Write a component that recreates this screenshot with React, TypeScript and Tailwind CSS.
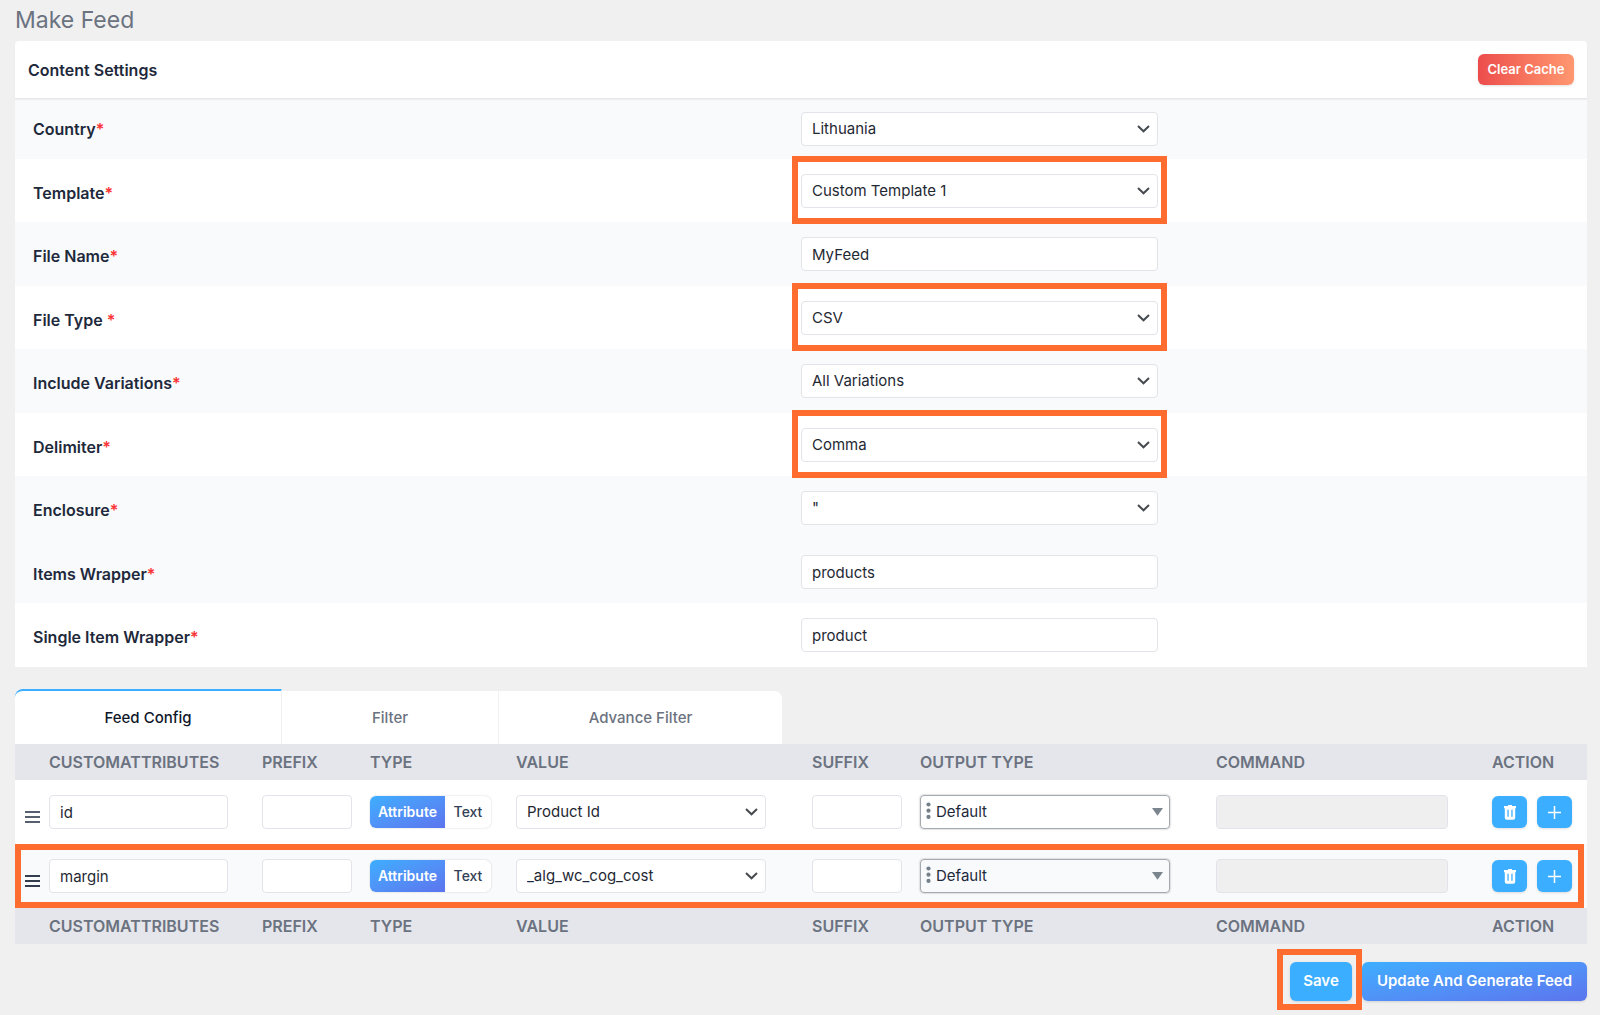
import type { ReactNode } from 'react';

type Field = {
  id: string;
  label: string;
  value: string;
  select?: boolean;
  marked?: boolean;
  className: string;
};

const fields: Field[] = [
  { id: 'country', label: 'Country', value: 'Lithuania', select: true, className: 'bg-[#f9fafc] pt-[13px] pb-[13px]' },
  { id: 'template', label: 'Template', value: 'Custom Template 1', select: true, marked: true, className: 'bg-white pt-[15px] pb-[14px]' },
  { id: 'filename', label: 'File Name', value: 'MyFeed', className: 'bg-[#f9fafc] pt-[15px] pb-[15px]' },
  { id: 'filetype', label: 'File Type ', value: 'CSV', select: true, marked: true, className: 'bg-white pt-[15px] pb-[14px]' },
  { id: 'variations', label: 'Include Variations', value: 'All Variations', select: true, className: 'bg-[#f9fafc] pt-[15px] pb-[15px]' },
  { id: 'delimiter', label: 'Delimiter', value: 'Comma', select: true, marked: true, className: 'bg-white pt-[15px] pb-[14px]' },
  { id: 'enclosure', label: 'Enclosure', value: '"', select: true, className: 'bg-[#f9fafc] pt-[15px] pb-[15px]' },
  { id: 'items', label: 'Items Wrapper', value: 'products', className: 'bg-[#f9fafc] pt-[15px] pb-[14px]' },
  { id: 'item', label: 'Single Item Wrapper', value: 'product', className: 'bg-white pt-[15px] pb-[15px]' },
];

const rows = [
  { attribute: 'id', value: 'Product Id' },
  { attribute: 'margin', value: '_alg_wc_cog_cost', marked: true },
];

const headings = ['CustomAttributes', 'Prefix', 'Type', 'Value', 'Suffix', 'Output Type', 'Command', 'Action'];

const control = 'block h-[34px] w-full rounded border border-[#e2e4e9] bg-white px-[10px] text-[15px] text-[#1f2933] outline-none';

function TextInput({ id, label, value = '', disabled }: { id?: string; label?: string; value?: string; disabled?: boolean }) {
  return (
    <input
      id={id}
      type="text"
      aria-label={label}
      defaultValue={value}
      disabled={disabled}
      className={disabled ? 'block h-[34px] w-full rounded border border-[#e2e4e9] bg-[#efefef]' : control}
    />
  );
}

function Select({ id, label, value }: { id?: string; label?: string; value: string }) {
  return (
    <div className="relative">
      <select id={id} aria-label={label} defaultValue={value} className={`${control} appearance-none`}>
        <option>{value}</option>
      </select>
      <svg
        className="pointer-events-none absolute top-[13px] right-[8px]"
        width="13"
        height="8"
        viewBox="0 0 13 8"
        fill="none"
        stroke="#464b50"
        strokeWidth="2"
      >
        <path d="M1 1l5.5 5.3L12 1" />
      </svg>
    </div>
  );
}

function OutputSelect() {
  return (
    <div className="relative">
      <select
        aria-label="Output type"
        className="block h-[34px] w-full appearance-none rounded border border-[#a3a9ae] bg-transparent pl-[15px] text-[15px] text-[#1e293b] shadow-[0_0_2px_rgba(0,0,0,0.35)] outline-none"
      >
        <option>Default</option>
      </select>
      <svg className="pointer-events-none absolute top-[7px] left-[6px]" width="5" height="18" viewBox="0 0 5 18" fill="#74808a">
        <circle cx="2.5" cy="2.5" r="2.1" />
        <circle cx="2.5" cy="8.7" r="2.1" />
        <circle cx="2.5" cy="14.9" r="2.1" />
      </svg>
      <svg className="pointer-events-none absolute top-[13px] right-[7px]" width="11" height="8" viewBox="0 0 11 8" fill="#7b858e">
        <path d="M0 0h11L5.5 7.8z" />
      </svg>
    </div>
  );
}

function IconButton({ label, children }: { label: string; children: ReactNode }) {
  return (
    <button
      type="button"
      aria-label={label}
      className="flex h-8 w-[35px] items-center justify-center rounded-md bg-[#3caeff] text-white shadow-sm"
    >
      {children}
    </button>
  );
}

function HeadRow() {
  return (
    <tr className="h-9 bg-[#e5e6eb] text-left text-[#6b7280]">
      <td />
      {headings.map((heading) => (
        <th key={heading} className="text-base leading-6 font-semibold uppercase">
          {heading}
        </th>
      ))}
    </tr>
  );
}

export default function App() {
  return (
    <main className="min-h-screen bg-[#f0f0f0] pr-[13px] pb-3 pl-[15px] font-['Inter',sans-serif] text-[#1e293b]">
      <h1 className="h-[41px] pt-1 text-[23px] leading-8 text-[#6b7280]">Make Feed</h1>

      <section>
        <header className="relative flex h-[58px] items-center justify-between rounded-t border-b border-[#e5e7eb] bg-white px-[13px] shadow-[0_1px_2px_rgba(0,0,0,0.06)]">
          <h2 className="text-base font-semibold">Content Settings</h2>
          <button
            type="button"
            className="h-[31px] w-24 rounded-md bg-linear-to-r from-[#ec4c4c] to-[#ff9770] text-[13px] font-semibold text-white shadow-sm"
          >
            Clear Cache
          </button>
        </header>
        {fields.map((field, index) => (
          <div key={field.id} className={`grid grid-cols-2 ${field.className}`}>
            <label
              htmlFor={field.id}
              className={`pl-[18px] text-base leading-6 font-semibold whitespace-pre ${index === 0 ? 'pt-[5px]' : 'pt-[7px]'}`}
            >
              {field.label}
              <span className="text-[#f93434]">*</span>
            </label>
            <div className="relative w-[357px]">
              {field.select ? (
                <Select id={field.id} value={field.value} />
              ) : (
                <TextInput id={field.id} value={field.value} />
              )}
              {field.marked && (
                <div className="pointer-events-none absolute -inset-x-[9px] -top-[18px] z-10 h-[68px] border-6 border-[#ff6c2f]" />
              )}
            </div>
          </div>
        ))}
      </section>

      <nav className="mt-[22px] flex items-end text-[15px] font-medium text-[#6b7280]">
        <button type="button" className="h-[55px] w-[267px] rounded-tl-lg border-t-2 border-r border-t-[#3caeff] border-r-[#f0f1f3] bg-white pt-0.5 text-[#0f172a]">
          Feed Config
        </button>
        <button type="button" className="h-[53px] w-[217px] border-r border-[#f0f1f3] bg-white pt-0.5">
          Filter
        </button>
        <button type="button" className="h-[53px] w-[283px] rounded-tr-lg bg-white pt-0.5">
          Advance Filter
        </button>
      </nav>

      <table className="w-full table-fixed border-collapse">
        <colgroup>
          <col className="w-[34px]" />
          <col className="w-[213px]" />
          <col className="w-[108px]" />
          <col className="w-[146px]" />
          <col className="w-[296px]" />
          <col className="w-[108px]" />
          <col className="w-[296px]" />
          <col className="w-[276px]" />
          <col className="w-[95px]" />
        </colgroup>
        <thead>
          <HeadRow />
        </thead>
        <tbody>
          {rows.map((row) => (
            <tr key={row.attribute} className="relative h-16 bg-white even:bg-[#f9fafc]">
              <td className="pt-[9px] pl-[10px]">
                <svg width="15" height="12" viewBox="0 0 15 12" stroke={row.marked ? '#333d4d' : '#56606e'} strokeWidth="1.8">
                  <path d="M0 1h15M0 6h15M0 11h15" />
                </svg>
                {row.marked && (
                  <div className="pointer-events-none absolute inset-y-0 right-[3px] left-0 border-6 border-[#ff6c2f]" />
                )}
              </td>
              <td className="pr-[34px]">
                <TextInput label="Custom attribute" value={row.attribute} />
              </td>
              <td className="pr-[18px]">
                <TextInput label="Prefix" />
              </td>
              <td>
                <div className="flex h-8 w-[121px] overflow-hidden rounded-md bg-white text-sm shadow-[0_0_2px_rgba(0,0,0,0.2)]">
                  <button type="button" className="w-[75px] bg-linear-to-br from-[#3caeff] to-[#5b74ee] font-semibold text-white">
                    Attribute
                  </button>
                  <button type="button" className="flex-1 font-medium text-[#334155]">
                    Text
                  </button>
                </div>
              </td>
              <td className="pr-[46px]">
                <Select label="Value" value={row.value} />
              </td>
              <td className="pr-[18px]">
                <TextInput label="Suffix" />
              </td>
              <td className="pr-[46px]">
                <OutputSelect />
              </td>
              <td className="pr-[44px]">
                <TextInput label="Command" disabled />
              </td>
              <td>
                <div className="flex gap-[10px]">
                  <IconButton label="Delete">
                    <svg width="12" height="15" viewBox="0 0 12 15" fill="currentColor" fillRule="evenodd">
                      <path d="M4 0h4v1h4v2.2H0V1h4zM.8 3.2h10.4V13a1.8 1.8 0 0 1-1.8 1.8H2.6A1.8 1.8 0 0 1 .8 13zM3.4 4.8v7h1.3v-7zm3.9 0v7h1.3v-7z" />
                    </svg>
                  </IconButton>
                  <IconButton label="Add">
                    <svg width="13" height="13" viewBox="0 0 13 13" stroke="currentColor" strokeWidth="1.5">
                      <path d="M6.5 0v13M0 6.5h13" />
                    </svg>
                  </IconButton>
                </div>
              </td>
            </tr>
          ))}
        </tbody>
        <tfoot>
          <HeadRow />
        </tfoot>
      </table>

      <div className="mt-[18px] flex justify-end gap-[10px] text-[15px] font-semibold text-white">
        <div className="relative">
          <button type="button" className="h-[39px] w-[62px] rounded-md bg-[#3caeff] shadow-sm">
            Save
          </button>
          <div className="pointer-events-none absolute -top-[13px] -right-[10px] -bottom-[9px] -left-[13px] z-10 border-6 border-[#ff6c2f]" />
        </div>
        <button type="button" className="h-[39px] w-[225px] rounded-md bg-linear-to-br from-[#3caeff] to-[#5b74ee] shadow-sm">
          Update And Generate Feed
        </button>
      </div>
    </main>
  );
}
